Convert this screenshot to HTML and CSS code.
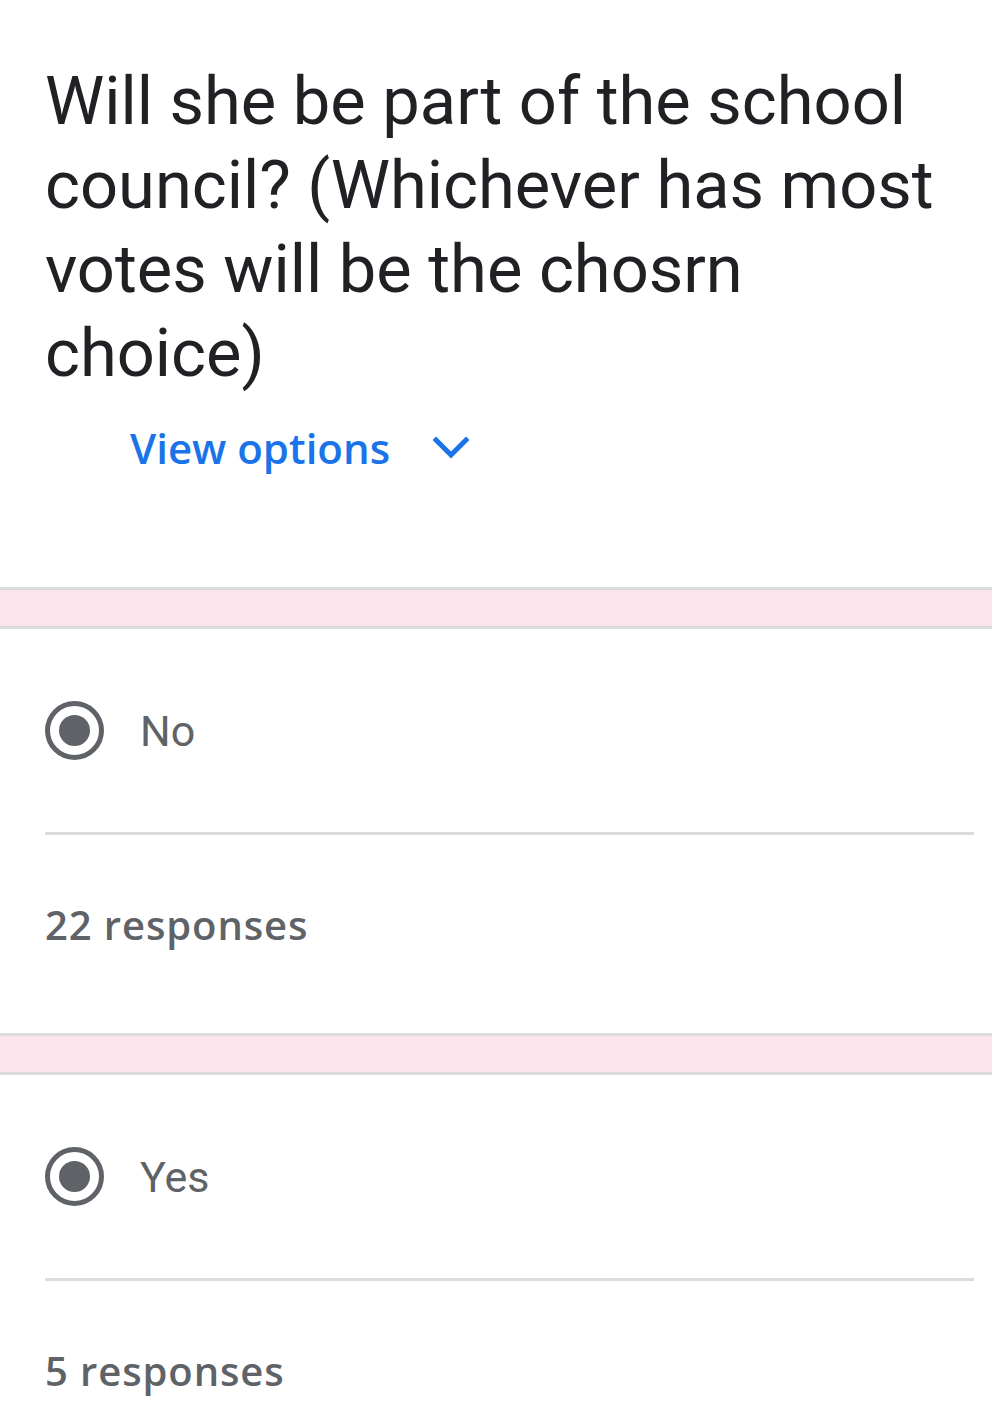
FILE: index.html
```html
<!DOCTYPE html>
<html>
<head>
<meta charset="utf-8">
<link rel="stylesheet" href="styles.css">
</head>
<body>
<div class="header">
  <h1 class="title">Will she be part of the school council? (Whichever has most votes will be the chosrn choice)</h1>
  <div class="view-options">
    <span class="view-label">View options</span>
    <svg class="chevron" width="36" height="24" viewBox="0 0 36 24"><path d="M3 5 L18 20 L33 5" fill="none" stroke="#1a73e8" stroke-width="5" stroke-linecap="square" stroke-linejoin="miter"/></svg>
  </div>
</div>

<div class="section">
  <div class="band"></div>
  <div class="option">
    <span class="radio"><span class="dot"></span></span>
    <span class="option-label">No</span>
  </div>
  <div class="divider"></div>
  <div class="count">22 responses</div>
</div>

<div class="section">
  <div class="band"></div>
  <div class="option">
    <span class="radio"><span class="dot"></span></span>
    <span class="option-label">Yes</span>
  </div>
  <div class="divider"></div>
  <div class="count">5 responses</div>
</div>
</body>
</html>
```

FILE: styles.css
```css
html, body {
  margin: 0;
  padding: 0;
  background: #ffffff;
}
body {
  font-family: Roboto, "Noto Sans", sans-serif;
  width: 992px;
  overflow: hidden;
}
.header {
  padding: 59px 45px 0 45px;
  height: 587px;
  box-sizing: border-box;
}
.title {
  margin: 0;
  font-family: Roboto, sans-serif;
  font-weight: 400;
  font-size: 66.8px;
  line-height: 84px;
  color: #202124;
}
.view-options {
  display: flex;
  align-items: center;
  margin-top: 24px;
  padding-left: 85px;
  height: 56px;
}
.view-label {
  font-family: "Open Sans", Roboto, sans-serif;
  font-weight: 600;
  font-size: 42px;
  letter-spacing: 0;
  color: #1a73e8;
}
.chevron {
  margin-left: 43px;
  display: block;
}
.band {
  height: 36px;
  background: #fce4ec;
  border-top: 3px solid #dadce0;
  border-bottom: 3px solid #dadce0;
}
.option {
  display: flex;
  align-items: center;
  height: 203px;
  padding-left: 45px;
}
.radio {
  width: 59px;
  height: 59px;
  box-sizing: border-box;
  border: 5px solid #5f6368;
  border-radius: 50%;
  display: flex;
  align-items: center;
  justify-content: center;
}
.dot {
  width: 31px;
  height: 31px;
  border-radius: 50%;
  background: #5f6368;
}
.option-label {
  margin-left: 36px;
  font-size: 43px;
  color: #5f6368;
}
.divider {
  height: 3px;
  background: #dadce0;
  margin: 0 18px 0 45px;
}
.count {
  height: 198px;
  box-sizing: border-box;
  padding: 62px 0 0 45px;
  font-family: "Open Sans", Roboto, sans-serif;
  font-weight: 600;
  font-size: 40px;
  letter-spacing: 0.9px;
  line-height: 56px;
  color: #5f6368;
}
```
